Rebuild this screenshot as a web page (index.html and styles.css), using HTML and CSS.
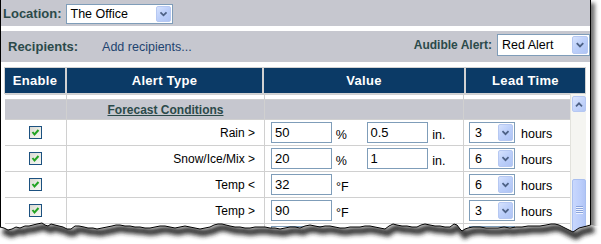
FILE: index.html
```html
<!DOCTYPE html>
<html>
<head>
<meta charset="utf-8">
<link rel="stylesheet" href="styles.css">
</head>
<body>
<div class="frame">
  <div class="bar bar-top">
    <span class="label">Location:</span>
    <div class="select sel-loc">
      <span class="sel-text">The Office</span>
      <span class="sel-btn"><svg width="15" height="18" viewBox="0 0 15 18"><path d="M4 7 L7.5 10.5 L11 7" fill="none" stroke="#4d6185" stroke-width="2"/></svg></span>
    </div>
  </div>
  <div class="bar bar-recip">
    <span class="label">Recipients:</span>
    <span class="link">Add recipients...</span>
    <span class="spacer"></span>
    <span class="label label-audible">Audible Alert:</span>
    <div class="select sel-alert">
      <span class="sel-text">Red Alert</span>
      <span class="sel-btn"><svg width="15" height="18" viewBox="0 0 15 18"><path d="M4 7 L7.5 10.5 L11 7" fill="none" stroke="#4d6185" stroke-width="2"/></svg></span>
    </div>
  </div>
  <div class="grid-wrap">
    <div class="thead">
      <div class="th">Enable</div>
      <div class="th">Alert Type</div>
      <div class="th">Value</div>
      <div class="th">Lead Time</div>
    </div>
    <div class="tbody">
      <div class="rows">
        <div class="td"></div><div class="td"></div><div class="td"></div><div class="td"></div>

        <div class="td sec"></div>
        <div class="td sec sec-title"><span>Forecast Conditions</span></div>
        <div class="td sec"></div>
        <div class="td sec"></div>

        <div class="td c-en"><span class="chk"><svg width="11" height="11" viewBox="0 0 11 11"><path d="M2.5 5 L4.5 7.5 L8.5 3" fill="none" stroke="#22a322" stroke-width="2"/></svg></span></div>
        <div class="td c-type">Rain &gt;</div>
        <div class="td c-val"><span class="inp">50</span><span class="unit">%</span><span class="inp inp2">0.5</span><span class="unit">in.</span></div>
        <div class="td c-lead"><div class="select sel-lead"><span class="sel-text">3</span><span class="sel-btn"><svg width="15" height="17" viewBox="0 0 15 17"><path d="M4 7 L7.5 10.5 L11 7" fill="none" stroke="#4d6185" stroke-width="2"/></svg></span></div><span class="hrs">hours</span></div>

        <div class="td c-en"><span class="chk"><svg width="11" height="11" viewBox="0 0 11 11"><path d="M2.5 5 L4.5 7.5 L8.5 3" fill="none" stroke="#22a322" stroke-width="2"/></svg></span></div>
        <div class="td c-type">Snow/Ice/Mix &gt;</div>
        <div class="td c-val"><span class="inp">20</span><span class="unit">%</span><span class="inp inp2">1</span><span class="unit">in.</span></div>
        <div class="td c-lead"><div class="select sel-lead"><span class="sel-text">6</span><span class="sel-btn"><svg width="15" height="17" viewBox="0 0 15 17"><path d="M4 7 L7.5 10.5 L11 7" fill="none" stroke="#4d6185" stroke-width="2"/></svg></span></div><span class="hrs">hours</span></div>

        <div class="td c-en"><span class="chk"><svg width="11" height="11" viewBox="0 0 11 11"><path d="M2.5 5 L4.5 7.5 L8.5 3" fill="none" stroke="#22a322" stroke-width="2"/></svg></span></div>
        <div class="td c-type">Temp &lt;</div>
        <div class="td c-val"><span class="inp">32</span><span class="unit">°F</span></div>
        <div class="td c-lead"><div class="select sel-lead"><span class="sel-text">6</span><span class="sel-btn"><svg width="15" height="17" viewBox="0 0 15 17"><path d="M4 7 L7.5 10.5 L11 7" fill="none" stroke="#4d6185" stroke-width="2"/></svg></span></div><span class="hrs">hours</span></div>

        <div class="td c-en"><span class="chk"><svg width="11" height="11" viewBox="0 0 11 11"><path d="M2.5 5 L4.5 7.5 L8.5 3" fill="none" stroke="#22a322" stroke-width="2"/></svg></span></div>
        <div class="td c-type">Temp &gt;</div>
        <div class="td c-val"><span class="inp">90</span><span class="unit">°F</span></div>
        <div class="td c-lead"><div class="select sel-lead"><span class="sel-text">3</span><span class="sel-btn"><svg width="15" height="17" viewBox="0 0 15 17"><path d="M4 7 L7.5 10.5 L11 7" fill="none" stroke="#4d6185" stroke-width="2"/></svg></span></div><span class="hrs">hours</span></div>

        <div class="td c-en"></div>
        <div class="td c-type"></div>
        <div class="td c-val"><span class="inp">30</span><span class="unit"></span></div>
        <div class="td c-lead"><div class="select sel-lead"><span class="sel-text"></span><span class="sel-btn"></span></div></div>
      </div>
      <div class="scrollbar">
        <div class="sb-up"><svg width="14" height="16" viewBox="0 0 14 16"><path d="M3.5 9.5 L7 6 L10.5 9.5" fill="none" stroke="#4d6185" stroke-width="2"/></svg></div>
        <div class="sb-thumb"><span class="grip"></span><span class="grip"></span><span class="grip"></span><span class="grip"></span></div>
      </div>
    </div>
  </div>
</div>
<svg class="tear" width="601" height="28" viewBox="0 216 601 28">
  <defs>
    <filter id="blur" x="-10%" y="-100%" width="120%" height="300%"><feGaussianBlur stdDeviation="2"/></filter>
    <clipPath id="below"><polygon points="0,227 4,228 8,230 12,229 16,227 20,228 25,226 29,226 33,225 37,224 42,223 45,225 48,226 51,224 55,225 59,226 63,227 67,229 71,229 75,226 79,226 84,227 88,228 93,228 97,229 102,228 107,227 112,226 116,225 120,225 125,226 130,226 135,227 140,227 145,228 150,228 155,227 160,226 165,226 170,227 175,228 180,227 185,226 190,227 195,228 200,229 205,228 210,227 214,225 218,224 222,224 226,225 230,226 235,227 240,227 245,228 250,228 255,227 260,227 265,227 270,228 275,228 280,229 285,228 290,227 295,227 300,228 305,226 310,225 315,226 320,227 325,226 330,226 335,227 340,228 345,228 350,227 355,227 360,227 365,226 370,226 375,227 380,228 385,229 389,226 393,224 397,225 402,226 407,226 412,227 417,227 421,225 425,224 430,225 435,226 440,226 445,227 450,227 454,224 457,225 460,229 462,231 465,229 468,228 473,227 480,227 486,228 492,228 498,228 504,227 510,228 516,227 522,227 528,226 534,226 540,226 546,225 551,224 555,224 559,225 563,227 567,229 571,231 573,232 576,230 579,228 583,227 587,226 591,225 595,226 601,226 601,244 0,244"/></clipPath>
  </defs>
  <polygon fill="#fff" points="0,227 4,228 8,230 12,229 16,227 20,228 25,226 29,226 33,225 37,224 42,223 45,225 48,226 51,224 55,225 59,226 63,227 67,229 71,229 75,226 79,226 84,227 88,228 93,228 97,229 102,228 107,227 112,226 116,225 120,225 125,226 130,226 135,227 140,227 145,228 150,228 155,227 160,226 165,226 170,227 175,228 180,227 185,226 190,227 195,228 200,229 205,228 210,227 214,225 218,224 222,224 226,225 230,226 235,227 240,227 245,228 250,228 255,227 260,227 265,227 270,228 275,228 280,229 285,228 290,227 295,227 300,228 305,226 310,225 315,226 320,227 325,226 330,226 335,227 340,228 345,228 350,227 355,227 360,227 365,226 370,226 375,227 380,228 385,229 389,226 393,224 397,225 402,226 407,226 412,227 417,227 421,225 425,224 430,225 435,226 440,226 445,227 450,227 454,224 457,225 460,229 462,231 465,229 468,228 473,227 480,227 486,228 492,228 498,228 504,227 510,228 516,227 522,227 528,226 534,226 540,226 546,225 551,224 555,224 559,225 563,227 567,229 571,231 573,232 576,230 579,228 583,227 587,226 591,225 595,226 601,226 601,244 0,244"/>
  <g clip-path="url(#below)">
    <polyline filter="url(#blur)" fill="none" stroke="#222" stroke-opacity="0.9" stroke-width="7" transform="translate(3,4)" points="0,227 4,228 8,230 12,229 16,227 20,228 25,226 29,226 33,225 37,224 42,223 45,225 48,226 51,224 55,225 59,226 63,227 67,229 71,229 75,226 79,226 84,227 88,228 93,228 97,229 102,228 107,227 112,226 116,225 120,225 125,226 130,226 135,227 140,227 145,228 150,228 155,227 160,226 165,226 170,227 175,228 180,227 185,226 190,227 195,228 200,229 205,228 210,227 214,225 218,224 222,224 226,225 230,226 235,227 240,227 245,228 250,228 255,227 260,227 265,227 270,228 275,228 280,229 285,228 290,227 295,227 300,228 305,226 310,225 315,226 320,227 325,226 330,226 335,227 340,228 345,228 350,227 355,227 360,227 365,226 370,226 375,227 380,228 385,229 389,226 393,224 397,225 402,226 407,226 412,227 417,227 421,225 425,224 430,225 435,226 440,226 445,227 450,227 454,224 457,225 460,229 462,231 465,229 468,228 473,227 480,227 486,228 492,228 498,228 504,227 510,228 516,227 522,227 528,226 534,226 540,226 546,225 551,224 555,224 559,225 563,227 567,229 571,231 573,232 576,230 579,228 583,227 587,226 591,225"/>
  </g>
  <polyline fill="none" stroke="#000" stroke-width="1" points="0,227 4,228 8,230 12,229 16,227 20,228 25,226 29,226 33,225 37,224 42,223 45,225 48,226 51,224 55,225 59,226 63,227 67,229 71,229 75,226 79,226 84,227 88,228 93,228 97,229 102,228 107,227 112,226 116,225 120,225 125,226 130,226 135,227 140,227 145,228 150,228 155,227 160,226 165,226 170,227 175,228 180,227 185,226 190,227 195,228 200,229 205,228 210,227 214,225 218,224 222,224 226,225 230,226 235,227 240,227 245,228 250,228 255,227 260,227 265,227 270,228 275,228 280,229 285,228 290,227 295,227 300,228 305,226 310,225 315,226 320,227 325,226 330,226 335,227 340,228 345,228 350,227 355,227 360,227 365,226 370,226 375,227 380,228 385,229 389,226 393,224 397,225 402,226 407,226 412,227 417,227 421,225 425,224 430,225 435,226 440,226 445,227 450,227 454,224 457,225 460,229 462,231 465,229 468,228 473,227 480,227 486,228 492,228 498,228 504,227 510,228 516,227 522,227 528,226 534,226 540,226 546,225 551,224 555,224 559,225 563,227 567,229 571,231 573,232 576,230 579,228 583,227 587,226 590.5,225"/>
</svg>
</body>
</html>
```
FILE: styles.css
```css
html, body {
  margin: 0;
  padding: 0;
}
body {
  width: 601px;
  height: 244px;
  overflow: hidden;
  position: relative;
  background: #fff;
  font-family: "Liberation Sans", Arial, sans-serif;
  font-size: 12px;
  color: #000;
}
.frame {
  width: 589px;
  height: 244px;
  overflow: hidden;
  border-left: 1px solid #000;
  border-right: 1px solid #000;
  background: #fff;
  box-shadow: 4px 3px 4px rgba(0, 0, 0, 0.55);
}
.bar {
  display: flex;
  align-items: center;
  background: #c6c7cf;
}
.bar-top {
  height: 26px;
  padding-left: 2px;
}
.bar-recip {
  height: 31px;
  margin-top: 5px;
  padding-left: 7px;
}
.label {
  font-weight: bold;
  font-size: 13px;
  color: #2b4a4a;
}
.label-audible {
  font-size: 12px;
  margin-right: 5px;
  margin-bottom: 3px;
}
.link {
  margin-left: 24px;
  color: #1e4470;
  font-size: 12.5px;
}
.spacer {
  flex: 1;
}
.select {
  display: flex;
  align-items: stretch;
  box-sizing: border-box;
  background: #fff;
  border: 1px solid #7f9db9;
}
.sel-text {
  flex: 1;
  display: flex;
  align-items: center;
  padding-left: 4px;
  font-size: 12.5px;
}
.sel-btn {
  width: 15px;
  margin: 1px;
  box-sizing: border-box;
  border: 1px solid #b6c8f2;
  border-radius: 2px;
  background: linear-gradient(135deg, #d6e2fd 0%, #bccffa 50%, #afc4f4 100%);
  display: flex;
  align-items: center;
  justify-content: center;
  overflow: hidden;
}
.sel-loc {
  width: 107px;
  height: 20px;
  margin-left: 4px;
  margin-top: 2px;
}
.sel-alert {
  width: 93px;
  height: 22px;
  margin-bottom: 4px;
}
.sel-alert .sel-btn {
  width: 16px;
}
.grid-wrap {
  margin-top: 5px;
  margin-left: 3px;
}
.thead {
  width: 582px;
  box-sizing: border-box;
  padding: 1px;
  display: grid;
  grid-template-columns: 60px 195px 200px 1fr;
  column-gap: 2px;
  background: #d2d2d2;
}
.th {
  height: 25px;
  background: #0b3a66;
  color: #fff;
  font-weight: bold;
  font-size: 13px;
  letter-spacing: 0.3px;
  display: flex;
  align-items: center;
  justify-content: center;
}
.tbody {
  display: flex;
  margin-left: 1px;
  height: 150px;
  overflow: hidden;
}
.rows {
  width: 565px;
  height: 160px;
  box-sizing: border-box;
  padding-top: 1px;
  display: grid;
  grid-template-columns: 61px 197px 198px 1fr;
  grid-template-rows: 4px 19px repeat(5, 25px);
  gap: 1px;
  align-content: start;
  background: #d0d0d0;
}
.td {
  background: #fff;
  display: flex;
  align-items: center;
  min-width: 0;
  overflow: hidden;
}
.sec {
  background: #c6c7cf;
}
.sec-title {
  justify-content: center;
  font-weight: bold;
  font-size: 12px;
  color: #2b4a4a;
  text-decoration: underline;
}
.c-en {
  justify-content: center;
}
.chk {
  width: 13px;
  height: 13px;
  box-sizing: border-box;
  border: 1px solid #1c5180;
  background: linear-gradient(135deg, #d8d8d0 0%, #ebebe5 50%, #f8f8f4 100%);
  display: flex;
}
.c-type {
  justify-content: flex-end;
  padding-right: 9px;
  font-size: 12px;
}
.c-val {
  padding-left: 6px;
}
.inp {
  width: 61px;
  height: 21px;
  box-sizing: border-box;
  border: 1px solid #7f9db9;
  padding-left: 3px;
  font-size: 13px;
  display: flex;
  align-items: center;
}
.inp2 {
  width: 62px;
}
.unit {
  width: 35px;
  box-sizing: border-box;
  padding-left: 4px;
  padding-top: 4px;
  font-size: 12.5px;
}
.c-lead {
  padding-left: 5px;
}
.sel-lead {
  width: 46px;
  height: 21px;
}
.sel-lead .sel-text {
  padding-left: 5px;
}
.hrs {
  margin-left: 6px;
  padding-top: 3px;
  font-size: 12.5px;
}
.scrollbar {
  width: 16px;
  height: 150px;
  box-sizing: border-box;
  background: #f5f5f1;
  border-left: 1px solid #e2e2dc;
  padding-top: 2px;
  padding-left: 1px;
}
.sb-up {
  width: 14px;
  height: 16px;
  box-sizing: border-box;
  border: 1px solid #b6c8f2;
  border-radius: 2px;
  background: linear-gradient(135deg, #dbe5fd 0%, #c1d2fa 60%, #b3c7f5 100%);
  display: flex;
}
.sb-thumb {
  margin-top: 67px;
  width: 14px;
  height: 80px;
  box-sizing: border-box;
  border: 1px solid #a9bff0;
  border-radius: 2px;
  background: linear-gradient(90deg, #c8d7fd 0%, #bccefb 60%, #b1c5f6 100%);
  display: flex;
  flex-direction: column;
  align-items: center;
  padding-top: 26px;
  gap: 1px;
}
.grip {
  width: 7px;
  height: 1px;
  background: #8aa3dc;
  box-shadow: 0 1px 0 #eef3ff;
}
.tear {
  position: absolute;
  left: 0;
  top: 216px;
}
```
